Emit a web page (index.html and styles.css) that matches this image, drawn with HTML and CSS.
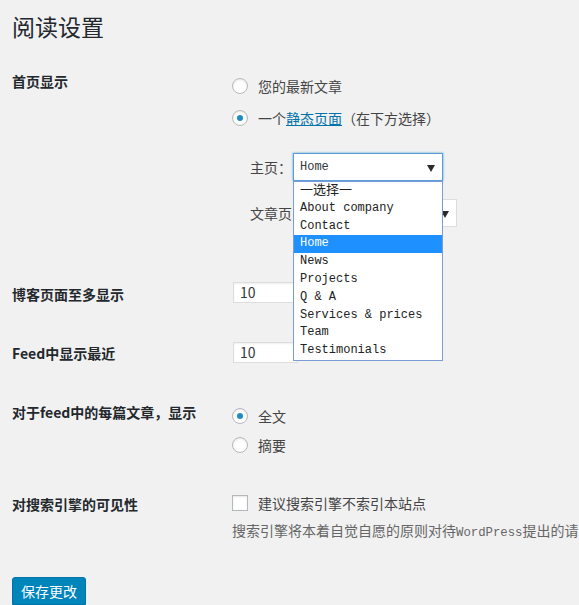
FILE: index.html
```html
<!DOCTYPE html>
<html lang="zh-CN">
<head>
<meta charset="utf-8">
<title>阅读设置</title>
<link rel="stylesheet" href="styles.css">
</head>
<body>
<div class="wrap">
  <h1 class="title">阅读设置</h1>

  <div class="row row-front">
    <div class="th">首页显示</div>
    <div class="td">
      <div class="choice"><span class="radio"></span><span>您的最新文章</span></div>
      <div class="choice choice-2"><span class="radio checked"></span><span>一个<a class="link" href="#">静态页面</a>（在下方选择）</span></div>
      <div class="sub">
        <div class="subrow">
          <span class="sublabel">主页：</span>
          <div class="select focus">
            <span class="mono">Home</span><span class="arrow"></span>
            <ul class="dropdown">
              <li>一选择一</li>
              <li>About company</li>
              <li>Contact</li>
              <li class="hl">Home</li>
              <li>News</li>
              <li>Projects</li>
              <li>Q &amp; A</li>
              <li>Services &amp; prices</li>
              <li>Team</li>
              <li>Testimonials</li>
            </ul>
          </div>
        </div>
        <div class="subrow subrow-2">
          <span class="sublabel">文章页：</span>
          <div class="select">
            <span class="mono">—选择—</span><span class="arrow"></span>
          </div>
        </div>
      </div>
    </div>
  </div>

  <div class="row row-posts">
    <div class="th">博客页面至多显示</div>
    <div class="td"><div class="input">10</div></div>
  </div>

  <div class="row row-feed">
    <div class="th">Feed中显示最近</div>
    <div class="td"><div class="input">10</div></div>
  </div>

  <div class="row row-full">
    <div class="th">对于feed中的每篇文章，显示</div>
    <div class="td">
      <div class="choice"><span class="radio checked"></span><span>全文</span></div>
      <div class="choice choice-b"><span class="radio"></span><span>摘要</span></div>
    </div>
  </div>

  <div class="row row-search">
    <div class="th">对搜索引擎的可见性</div>
    <div class="td">
      <div class="choice"><span class="checkbox"></span><span>建议搜索引擎不索引本站点</span></div>
      <p class="desc">搜索引擎将本着自觉自愿的原则对待<span class="mono-sm">WordPress</span>提出的请求。并不是所有搜索引擎都会遵守这类请求。</p>
    </div>
  </div>

  <div class="actions">
    <button class="button" type="button">保存更改</button>
  </div>
</div>
</body>
</html>
```

FILE: styles.css
```css
html, body {
  margin: 0;
  padding: 0;
  overflow: hidden;
}

body {
  background: #f1f1f1;
  color: #444;
  font-family: "Noto Sans CJK SC", "Noto Sans", sans-serif;
  font-size: 14px;
  line-height: 20px;
  width: 579px;
  height: 605px;
}

.wrap {
  padding-left: 12px;
}

.title {
  margin: 0;
  padding-top: 12px;
  font-size: 23px;
  line-height: 29px;
  font-weight: 400;
  color: #23282d;
}

.row {
  display: flex;
  align-items: flex-start;
}

.th {
  width: 220px;
  flex: none;
  font-weight: 700;
  color: #23282d;
  line-height: 20px;
  white-space: nowrap;
}

.td {
  flex: 1;
  min-width: 0;
}

/* row spacing: each row has a fixed height so offsets never accumulate */
.row-front { margin-top: 31px; height: 155px; }
.row-front .th { margin-top: -1px; }
.row-front .td { padding-top: 4px; }

.row-posts { margin-top: 55px; height: 21px; }
.row-posts .th { margin-top: 2px; }

.row-feed { margin-top: 39px; height: 21px; }
.row-feed .th { margin-top: 1px; }

.row-full { margin-top: 43px; height: 49px; }
.row-full .th { margin-top: -4px; }

.row-search { margin-top: 38px; height: 48px; }
.row-search .th { margin-top: 1px; }

/* choices */
.choice {
  display: flex;
  align-items: center;
  height: 20px;
  white-space: nowrap;
  color: #444;
}

.choice-2 { margin-top: 12px; }
.choice-b { margin-top: 9px; }

.radio,
.checkbox {
  flex: none;
  width: 16px;
  height: 16px;
  box-sizing: border-box;
  border: 1px solid #b4b9be;
  background: #fff;
  box-shadow: inset 0 1px 2px rgba(0, 0, 0, 0.1);
  margin-right: 10px;
  position: relative;
}

.radio {
  border-radius: 50%;
}

.radio.checked::after {
  content: "";
  position: absolute;
  left: 4px;
  top: 4px;
  width: 6px;
  height: 6px;
  border-radius: 50%;
  background: #1e8cbe;
}

.link {
  color: #0073aa;
  text-decoration: underline;
}

/* page selects */
.sub {
  margin-top: 25px;
  padding-left: 18px;
}

.subrow {
  display: flex;
  align-items: center;
  height: 28px;
}

.subrow-2 {
  margin-top: 18px;
}

.sublabel {
  white-space: nowrap;
}

.select {
  position: relative;
  box-sizing: border-box;
  width: 150px;
  height: 28px;
  margin-left: 1px;
  border: 1px solid #ddd;
  background: #fff;
  display: flex;
  align-items: center;
  padding-left: 6px;
  color: #32373c;
}

.select.focus {
  border-color: #5b9dd9;
  box-shadow: 0 0 2px rgba(30, 140, 190, 0.8);
  z-index: 2;
}

.mono {
  font-family: "Liberation Mono", "Noto Sans CJK SC", monospace;
  font-size: 12px;
}

.arrow {
  position: absolute;
  right: 7px;
  top: 11px;
  width: 0;
  height: 0;
  border-left: 4px solid transparent;
  border-right: 4px solid transparent;
  border-top: 7px solid #2b2b2b;
}

.dropdown {
  position: absolute;
  left: -1px;
  top: calc(100% + 1px);
  width: 150px;
  box-sizing: border-box;
  margin: 0;
  padding: 0;
  list-style: none;
  background: #fff;
  border: 1px solid #7a9bd4;
  font-family: "Liberation Mono", "Noto Sans CJK SC", monospace;
  font-size: 12px;
  color: #222;
}

.dropdown li {
  height: 17.8px;
  line-height: 17.8px;
  padding-left: 6px;
  white-space: nowrap;
}

.dropdown li:first-child {
  font-size: 13px;
}

.dropdown li.hl {
  background: #1e90ff;
  color: #fff;
}

/* number inputs */
.input {
  box-sizing: border-box;
  width: 65px;
  height: 21px;
  margin-left: 1px;
  border: 1px solid #ddd;
  background: #fff;
  box-shadow: inset 0 1px 2px rgba(0, 0, 0, 0.07);
  padding-left: 6px;
  line-height: 19px;
  color: #32373c;
}

/* description */
.desc {
  margin: 7px 0 0;
  color: #666;
  white-space: nowrap;
  line-height: 20px;
}

.mono-sm {
  font-family: "Liberation Mono", monospace;
  font-size: 12.3px;
}

/* button */
.actions {
  margin-top: 36px;
}

.button {
  box-sizing: border-box;
  width: 74px;
  height: 28px;
  padding: 0;
  background: #0085ba;
  border: 1px solid #0073aa;
  border-radius: 3px;
  box-shadow: 0 1px 0 #006799;
  color: #fff;
  font-family: "Noto Sans CJK SC", sans-serif;
  font-size: 14px;
  line-height: 26px;
  cursor: pointer;
}
```
